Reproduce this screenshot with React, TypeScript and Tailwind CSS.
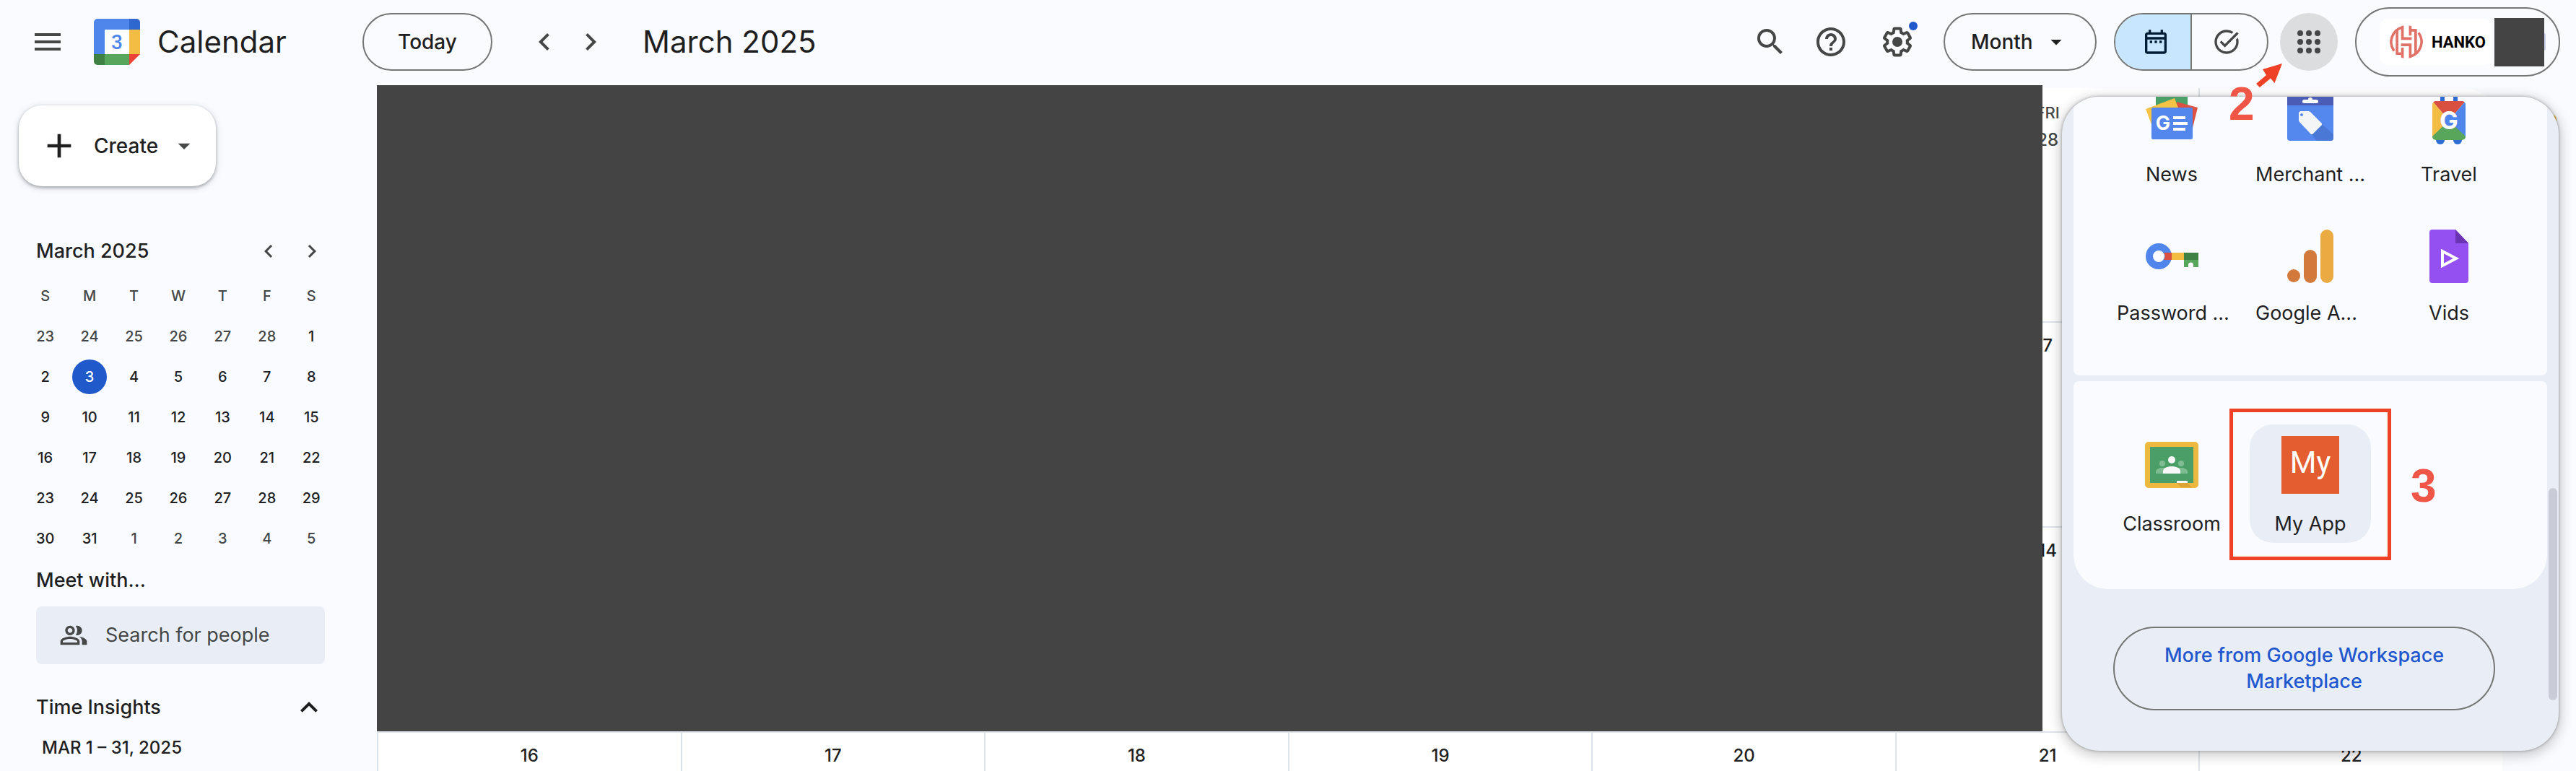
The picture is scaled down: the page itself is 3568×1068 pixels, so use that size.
import React from "react";
import {
  MdAdd, MdArrowDropDown, MdChevronLeft, MdChevronRight, MdExpandLess, MdHelpOutline, MdMenu,
  MdOutlineDateRange, MdOutlinePeopleAlt, MdSearch, MdTaskAlt,
} from "react-icons/md";

const GEAR =
  "M13.85 22.25h-3.7c-.74 0-1.36-.54-1.45-1.27l-.27-1.89c-.27-.14-.53-.29-.79-.46l-1.8.72c-.7.26-1.47-.03-1.81-.65L2.2 15.53c-.35-.66-.2-1.44.36-1.88l1.53-1.19c-.01-.15-.02-.3-.02-.46 0-.15.01-.31.02-.46l-1.52-1.19c-.59-.45-.74-1.26-.37-1.88l1.85-3.19c.34-.62 1.11-.9 1.79-.63l1.81.73c.26-.17.52-.32.78-.46l.27-1.91c.09-.7.71-1.25 1.44-1.25h3.7c.74 0 1.36.54 1.45 1.27l.27 1.89c.27.14.53.29.79.46l1.8-.72c.71-.26 1.48.03 1.82.65l1.84 3.18c.36.66.2 1.44-.36 1.88l-1.52 1.19c.01.15.02.3.02.46s-.01.31-.02.46l1.52 1.19c.56.45.72 1.23.37 1.86l-1.86 3.22c-.34.62-1.11.9-1.8.63l-1.8-.72c-.26.17-.52.32-.78.46l-.27 1.91c-.1.68-.72 1.22-1.46 1.22zm-3.23-2h2.76l.37-2.55.53-.22c.44-.18.88-.44 1.34-.78l.45-.34 2.38.96 1.38-2.4-2.03-1.58.07-.56c.03-.26.06-.51.06-.78s-.03-.53-.06-.78l-.07-.56 2.03-1.58-1.39-2.4-2.39.96-.45-.35c-.42-.32-.87-.58-1.33-.77l-.52-.22-.37-2.55h-2.76l-.37 2.55-.53.21c-.44.19-.88.44-1.34.79l-.45.33-2.38-.95-1.39 2.39 2.03 1.58-.07.56a7 7 0 0 0-.06.79c0 .26.02.53.06.78l.07.56-2.03 1.58 1.38 2.4 2.39-.96.45.35c.43.33.86.58 1.33.77l.53.22.38 2.55z";

function CalendarLogo() {
  return (
    <svg viewBox="0 0 64 64" className="size-16" aria-hidden="true">
      <path d="M5 0H49V15H15V49H0V5A5 5 0 0 1 5 0Z" fill="#4f86ec" />
      <path d="M49 0H59A5 5 0 0 1 64 5V15H49Z" fill="#2e67ce" />
      <path d="M49 15H64V49H49Z" fill="#f3bc42" />
      <path d="M15 49H49V64H15Z" fill="#58a55c" />
      <path d="M0 49H15V64H5A5 5 0 0 1 0 59Z" fill="#3f8142" />
      <path d="M49 49H64L49 64Z" fill="#e94435" />
      <path d="M15 15H49V49H15Z" fill="#fff" />
      <text x="32" y="42" textAnchor="middle" fontFamily="Roboto" fontSize="28" fontWeight="500" fill="#4f86ec">3</text>
    </svg>
  );
}

function HankoMark() {
  return (
    <svg viewBox="0 0 136 136" className="size-[46px]" aria-hidden="true">
      <defs>
        <clipPath id="hanko-disc"><circle cx="68" cy="68" r="68" /></clipPath>
      </defs>
      <g clipPath="url(#hanko-disc)" fill="none" stroke="#e07268" strokeWidth="11">
        <path d="M52 8A62 62 0 0 0 18 105M84 128A62 62 0 0 0 118 31" />
        <path d="M30 20V116H52M106 116V20H84" />
        <path d="M52 0V54H90M84 136V80H46M52 136V92M84 0V42" />
      </g>
    </svg>
  );
}

function NewsIcon() {
  return (
    <svg viewBox="0 0 80 80" className="size-20" aria-hidden="true">
      <rect x="18" y="6" width="44" height="40" rx="2" fill="#4ba067" />
      <path d="M47 21L76 29L68 61L40 50Z" fill="#db5242" />
      <path d="M4 31L44 16L56 48L13 55Z" fill="#f6c445" />
      <rect x="12" y="29" width="57" height="44" rx="2" fill="#5487ed" />
      <text x="28" y="60" textAnchor="middle" fontSize="27" fontWeight="700" fill="#fff">G</text>
      <path d="M42 41H59V45H42ZM42 49H62V53H42ZM42 57H59V61H42Z" fill="#fff" />
    </svg>
  );
}

function MerchantIcon() {
  return (
    <svg viewBox="0 0 80 80" className="size-20" aria-hidden="true">
      <rect x="8" y="8" width="64" height="67" rx="4" fill="#5588ee" />
      <path d="M8 8H72V26H8Z" fill="#4b5cb6" />
      <path d="M56 52L72 66V71A4 4 0 0 1 68 75H49L42 66Z" fill="#4a78d6" />
      <rect x="29" y="18" width="22" height="5" rx="2.5" fill="#fff" />
      <circle cx="40" cy="18" r="3" fill="#fff" />
      <path d="M26 34H38L40 35L56 51V53L43 66H41L25 49L24 47V36Z" fill="#f4f5f7" />
      <circle cx="28" cy="39" r="2" fill="#5588ee" />
    </svg>
  );
}

function TravelIcon() {
  return (
    <svg viewBox="0 0 80 80" className="size-20" aria-hidden="true">
      <defs>
        <clipPath id="suitcase"><rect x="17" y="20" width="46" height="54" rx="5" /></clipPath>
      </defs>
      <path d="M28 8H34V22H28ZM46 8H52V22H46Z" fill="#2f6bd3" />
      <circle cx="28" cy="74" r="6" fill="#2f6bd3" />
      <circle cx="52" cy="74" r="6" fill="#2f6bd3" />
      <g clipPath="url(#suitcase)">
        <path d="M17 20H63L40 47Z" fill="#da5040" />
        <path d="M17 20L40 47L17 74Z" fill="#f3bc42" />
        <path d="M63 20V74L40 47Z" fill="#5086ec" />
        <path d="M17 69L40 47L63 69V74H17Z" fill="#58a55c" />
      </g>
      <circle cx="40" cy="47" r="10" fill="#5086ec" />
      <text x="40" y="59" textAnchor="middle" fontSize="34" fontWeight="700" fill="#fff">G</text>
    </svg>
  );
}

function PasswordIcon() {
  return (
    <svg viewBox="0 0 80 80" className="size-20" aria-hidden="true">
      <circle cx="22" cy="43" r="13" fill="none" stroke="#5086ec" strokeWidth="10" />
      <path d="M29 38H40V48H29A9 9 0 0 0 29 38Z" fill="#da5040" />
      <path d="M40 38H57V48H40Z" fill="#f3bc42" />
      <path d="M57 38H77V48H57Z" fill="#3f8142" />
      <path d="M57 48H77V58H70V55A3 3 0 0 0 63 55V58H57Z" fill="#58a55c" />
    </svg>
  );
}

function AnalyticsIcon() {
  return (
    <svg viewBox="0 0 80 80" className="size-20" aria-hidden="true">
      <circle cx="17" cy="70" r="9" fill="#d27a3b" />
      <rect x="31" y="34" width="18" height="46" rx="9" fill="#d27a3b" />
      <rect x="54" y="6" width="18" height="74" rx="9" fill="#eaab42" />
    </svg>
  );
}

function VidsIcon() {
  return (
    <svg viewBox="0 0 80 80" className="size-20" aria-hidden="true">
      <path d="M17 6H49L67 25V76A4 4 0 0 1 63 80H17A4 4 0 0 1 13 76V10A4 4 0 0 1 17 6Z" fill="#9450f0" />
      <path d="M49 6L67 25H49Z" fill="#6c34b2" />
      <path d="M31 36V56L50 46Z" fill="none" stroke="#fff" strokeWidth="4" />
    </svg>
  );
}

function ClassroomIcon() {
  return (
    <svg viewBox="0 0 80 80" className="size-20" aria-hidden="true">
      <rect x="3" y="8" width="74" height="64" rx="5" fill="#edb840" />
      <rect x="10" y="15" width="60" height="50" fill="#4b9f66" />
      <g fill="#7fbb93">
        <circle cx="27" cy="38" r="4" />
        <circle cx="53" cy="38" r="4" />
        <path d="M18 52V49C18 46 23 44 27 44H53C57 44 62 46 62 49V52Z" />
      </g>
      <circle cx="40" cy="33" r="5" fill="#f7f7f7" />
      <path d="M28 52V49C28 44 34 42 40 42S52 44 52 49V52Z" fill="#f7f7f7" />
      <path d="M47 65H62L68 71H53Z" fill="#dda334" />
      <rect x="47" y="62" width="15" height="3" fill="#f7f7f7" />
    </svg>
  );
}

function MyAppIcon() {
  return (
    <span className="flex size-20 items-start justify-center bg-[#e35d30] pt-3 font-[Roboto] text-[42px] leading-[50px] text-white">
      My
    </span>
  );
}

type AppTileProps = { icon: React.ReactNode; label: string; active?: boolean; clipped?: boolean };

function AppTile({ icon, label, active = false, clipped = false }: AppTileProps) {
  return (
    <a
      href="#"
      className={
        "mx-3 flex h-[164px] flex-col items-center rounded-[32px] pt-4 whitespace-nowrap text-[27px] leading-9 text-[#1f1f1f] " +
        (active ? "bg-[#e9eef6]" : "")
      }
    >
      {icon}
      <span className={"mt-6 " + (clipped ? "w-[152px]" : "")}>{label}</span>
    </a>
  );
}

function AppsPanel() {
  return (
    <aside
      aria-label="Google apps"
      className="absolute top-[134px] right-6 w-[688px] rounded-[52px] bg-[#e9eef6] shadow-[0_4px_16px_4px_rgba(0,0,0,0.18),0_0_4px_rgba(0,0,0,0.35)]"
    >
      <div className="overflow-hidden rounded-[52px] px-4 pb-14">
        <div className="overflow-hidden rounded-b-lg bg-[#f9fbff] px-10 pb-[60px]">
          <div className="-mt-[30px] grid grid-cols-3 gap-y-7">
            <AppTile icon={<NewsIcon />} label="News" />
            <AppTile icon={<MerchantIcon />} label="Merchant ..." clipped />
            <AppTile icon={<TravelIcon />} label="Travel" />
            <AppTile icon={<PasswordIcon />} label="Password ..." clipped />
            <AppTile icon={<AnalyticsIcon />} label="Google A..." clipped />
            <AppTile icon={<VidsIcon />} label="Vids" />
          </div>
        </div>
        <div className="mt-2 grid grid-cols-3 rounded-t-lg rounded-b-[48px] bg-[#f9fbff] px-10 pt-[60px] pb-16">
          <AppTile icon={<ClassroomIcon />} label="Classroom" />
          <div className="relative">
            <AppTile icon={<MyAppIcon />} label="My App" active />
            <div className="absolute -top-[22px] -left-4 h-[210px] w-56 border-[5px] border-[#ee4126]">
              <span className="absolute top-[70px] left-[246px] font-[Liberation_Sans] text-[64px] leading-[64px] font-bold text-[#ef5647]">3</span>
            </div>
          </div>
        </div>
        <a
          href="#"
          className="mt-[52px] mr-[72px] ml-[55px] flex h-[116px] items-center justify-center rounded-full border-2 border-[#747775] px-14 text-center text-[27px] leading-9 font-medium text-[#2158ce]"
        >
          More from Google Workspace Marketplace
        </a>
      </div>
      <div className="absolute right-0.5 bottom-[70px] h-[294px] w-3 rounded-full bg-[#c9ccd6]" />
    </aside>
  );
}

function Header() {
  return (
    <header className="flex h-[122px] shrink-0 items-center pr-[22px] pb-1.5 text-[#444746]">
      <button aria-label="Main menu" className="ml-[42px]"><MdMenu className="size-12" /></button>
      <div className="ml-10 flex w-[372px] items-center gap-6">
        <CalendarLogo />
        <span className="text-[42px] leading-[56px] text-[#1f1f1f]">Calendar</span>
      </div>
      <button className="h-20 w-[180px] rounded-full border-2 border-[#747775] text-[28px] font-medium text-[#1f1f1f]">Today</button>
      <button aria-label="Previous month" className="ml-12"><MdChevronLeft className="size-12" /></button>
      <button aria-label="Next month" className="ml-4"><MdChevronRight className="size-12" /></button>
      <h1 className="ml-12 text-[42px] leading-[56px] text-[#1f1f1f]">March 2025</h1>

      <div className="ml-auto flex items-center">
        <button aria-label="Search"><MdSearch className="size-12" /></button>
        <button aria-label="Support" className="ml-9"><MdHelpOutline className="size-12" /></button>
        <button aria-label="Settings" className="relative ml-11">
          <svg viewBox="0 0 24 24" className="size-12" fill="currentColor" aria-hidden="true">
            <path d={GEAR} />
            <circle cx="12" cy="12" r="3.5" />
          </svg>
          <span className="absolute -top-1 -right-1 size-3 rounded-full bg-[#2059ca]" />
        </button>
        <button className="ml-10 flex h-20 w-[212px] items-center justify-between rounded-full border-2 border-[#747775] pr-9 pl-9 text-[28px] font-medium text-[#1f1f1f]">
          Month
          <MdArrowDropDown className="size-9" />
        </button>
        <div className="ml-6 flex h-20 w-[214px] overflow-hidden rounded-full border-2 border-[#747775]">
          <button aria-label="Calendar view" className="flex flex-1 items-center justify-center border-r-2 border-[#747775] bg-[#c8e7fe] pl-2 text-[#001d35]">
            <MdOutlineDateRange className="size-10" />
          </button>
          <button aria-label="Tasks view" className="flex flex-1 items-center justify-center pr-2">
            <MdTaskAlt className="size-10" />
          </button>
        </div>
        <button aria-label="Google apps" className="relative ml-4 flex size-20 items-center justify-center rounded-full bg-[#dcddde]">
          <svg viewBox="0 0 24 24" className="size-12" fill="currentColor" aria-hidden="true">
            {[6, 12, 18].map((cy) => [6, 12, 18].map((cx) => <circle key={cx + "-" + cy} cx={cx} cy={cy} r="2" />))}
          </svg>
          <span className="absolute top-[94px] -left-[71px] z-20 font-[Liberation_Sans] text-[64px] leading-[64px] font-bold text-[#ef5647]">2</span>
          <svg viewBox="0 0 36 34" className="absolute top-[70px] -left-[33px] z-20 h-[34px] w-9" aria-hidden="true">
            <path d="M36 0L25.500 27L20 20.500L5 33L0 28L14 16L9 8Z" fill="#ee4126" />
          </svg>
        </button>
        <button aria-label="Google account" className="ml-6 flex h-24 w-[284px] items-center rounded-full border-2 border-[#747775] pl-8">
          <span className="flex h-16 w-[156px] items-center gap-3 rounded-xl bg-white pl-3.5 font-[Roboto] text-[22px] font-bold text-black">
            <HankoMark />
            HANKO
          </span>
          <span className="ml-[3px] h-[67px] w-[69px] bg-[#444]" />
          <span className="h-6 w-0.5 rounded-r-full bg-[#c9cfe8]" />
        </button>
      </div>
    </header>
  );
}

const WEEKS = [
  [23, 24, 25, 26, 27, 28, 1],
  [2, 3, 4, 5, 6, 7, 8],
  [9, 10, 11, 12, 13, 14, 15],
  [16, 17, 18, 19, 20, 21, 22],
  [23, 24, 25, 26, 27, 28, 29],
  [30, 31, 1, 2, 3, 4, 5],
];

function dayClass(week: number, day: number) {
  if (week === 1 && day === 3) return "bg-[#2059ca] text-white";
  const outside = (week === 0 && day > 7) || (week === 5 && day < 7);
  return outside ? "text-[#444746]" : "text-[#1f1f1f]";
}

function Sidebar() {
  return (
    <nav className="w-[522px] shrink-0 pt-6 text-[#1f1f1f]">
      <button className="ml-[26px] flex h-28 w-[273px] items-center rounded-[32px] bg-white pl-7 text-[28px] font-medium shadow-[0_2px_4px_rgba(60,64,67,0.4),0_2px_8px_2px_rgba(60,64,67,0.12)]">
        <MdAdd className="size-14" />
        <span className="ml-5">Create</span>
        <MdArrowDropDown className="ml-4 size-10 text-[#444746]" />
      </button>

      <div className="mt-[66px] ml-[50px] flex h-12 items-center pr-[72px]">
        <h2 className="flex-1 text-[27px] font-medium">March 2025</h2>
        <button aria-label="Previous month" className="mr-6 text-[#444746]"><MdChevronLeft className="size-9" /></button>
        <button aria-label="Next month" className="text-[#444746]"><MdChevronRight className="size-9" /></button>
      </div>

      <table className="mt-2.5 ml-8 w-[430px] table-fixed text-center text-[20px] font-medium">
        <thead>
          <tr className="h-14 text-[#444746]">
            {["S", "M", "T", "W", "T", "F", "S"].map((d, i) => <th key={i} scope="col" className="p-0 font-medium">{d}</th>)}
          </tr>
        </thead>
        <tbody>
          {WEEKS.map((week, w) => (
            <tr key={w} className="h-14">
              {week.map((d, i) => (
                <td key={i} className="p-0">
                  <button className={"size-12 rounded-full align-middle " + dayClass(w, d)}>{d}</button>
                </td>
              ))}
            </tr>
          ))}
        </tbody>
      </table>

      <label htmlFor="people" className="mt-2.5 ml-[50px] block text-[27px] leading-10 font-medium">Meet with...</label>
      <div className="mt-4 ml-[50px] flex h-20 w-[400px] items-center rounded-lg bg-[#e9eef6] pl-8 text-[#444746]">
        <MdOutlinePeopleAlt className="size-10" />
        <input
          id="people"
          placeholder="Search for people"
          className="ml-6 min-w-0 flex-1 bg-transparent text-[27px] outline-none placeholder:text-[#444746]"
        />
      </div>

      <div className="mt-9 ml-[50px] flex items-center pr-[70px]">
        <h2 className="flex-1 text-[27px] font-medium">Time Insights</h2>
        <button aria-label="Collapse Time Insights"><MdExpandLess className="size-12" /></button>
      </div>
      <p className="mt-3.5 ml-[58px] text-[24px] leading-9 font-medium">MAR 1 – 31, 2025</p>
    </nav>
  );
}

const MONTH = [
  [23, 24, 25, 26, 27, 28, 1],
  [2, 3, 4, 5, 6, 7, 8],
  [9, 10, 11, 12, 13, 14, 15],
  [16, 17, 18, 19, 20, 21, 22],
];
const DAY_NAMES = ["SUN", "MON", "TUE", "WED", "THU", "FRI", "SAT"];

function MonthGrid() {
  return (
    <main className="relative min-w-0 flex-1">
      <div className="h-full overflow-hidden rounded-tr-[56px] bg-white">
        {MONTH.map((week, w) => (
          <div key={w} className={"grid grid-cols-7 " + (w === 0 ? "h-[323px]" : "h-[284px] border-t-2 border-[#dde3ea]")}>
            {week.map((d, i) => (
              <div
                key={i}
                className={
                  "border-l-2 border-[#dde3ea] text-center text-[24px] leading-8 font-medium " +
                  (w === 0 ? "pt-[18px] text-[#444746]" : "pt-4 text-[#1f1f1f]")
                }
              >
                {w === 0 && <div className="mb-1.5 text-[22px]">{DAY_NAMES[i]}</div>}
                {d}
              </div>
            ))}
          </div>
        ))}
      </div>
      <div className="absolute -top-1 left-0 h-[895px] w-[2307px] bg-[#444]" />
    </main>
  );
}

export default function App() {
  return (
    <div className="relative flex h-screen flex-col overflow-hidden bg-[#f9fbff] font-[Inter,sans-serif]">
      <Header />
      <div className="flex min-h-0 flex-1">
        <Sidebar />
        <MonthGrid />
        <div className="flex w-[102px] shrink-0 justify-center pt-[37px]">
          <span className="h-12 w-12 rounded-md bg-[#e5b53d]" />
        </div>
      </div>
      <AppsPanel />
    </div>
  );
}
